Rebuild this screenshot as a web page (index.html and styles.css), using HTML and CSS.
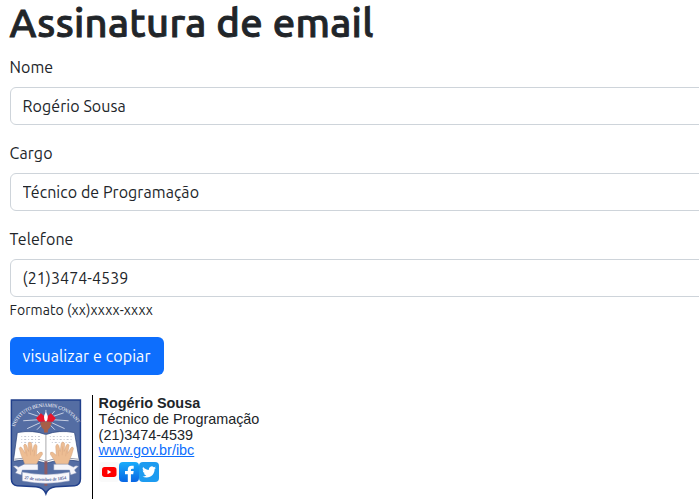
FILE: index.html
```
<!DOCTYPE html>
<html lang="pt-BR">
<head>
<meta charset="utf-8">
<title>Assinatura de email</title>
<link rel="stylesheet" href="styles.css">
</head>
<body>
<main class="page">
  <h1 class="title">Assinatura de email</h1>
  <form class="form">
    <div class="field">
      <label class="label" for="nome">Nome</label>
      <input class="control" id="nome" type="text" value="Rogério Sousa">
    </div>
    <div class="field">
      <label class="label" for="cargo">Cargo</label>
      <input class="control" id="cargo" type="text" value="Técnico de Programação">
    </div>
    <div class="field">
      <label class="label" for="telefone">Telefone</label>
      <input class="control" id="telefone" type="text" value="(21)3474-4539">
      <small class="hint">Formato (xx)xxxx-xxxx</small>
    </div>
    <button class="btn" type="button">visualizar e copiar</button>
  </form>
  <section class="signature">
    <svg class="crest" viewBox="-0.400 -0.400 73 98" width="72" height="98" role="img" aria-label="Instituto Benjamin Constant">
      <path d="M1 1H71V81Q71 87 65 88L46 89Q38 90 36 96Q34 90 26 89L7 88Q1 87 1 81Z" fill="#546da3" stroke="#203f8b" stroke-width="1.5"/>
      <path id="arc" d="M4.500 28C13 1 58 1 70 28" fill="none"/>
      <text class="crest-name"><textPath href="#arc" textLength="78">INSTITUTO BENJAMIN CONSTANT</textPath></text>
      <g stroke="#e5e9f3" stroke-width=".8">
        <path d="M36 20V11M33 19L27 12M39 19L45 12M30 18L18 14M42 18L54 14M28 21L13 22M44 21L59 22M30 24L17 30M42 24L55 30M32 26L27 31M40 26L45 31"/>
      </g>
      <path d="M31 14.500L35 18V23L29 23L26 19.500ZM41 14.500L37 18V23L43 23L46 19.500Z" fill="#e8152b"/>
      <path d="M36 13Q40 19 36 23Q32 19 36 13Z" fill="#fff"/>
      <path d="M30 24Q36 21.500 42 24L40 29L38 31V34H34V31L32 29Z" fill="#a65f48"/>
      <path d="M7 34Q23 31 36 36Q49 31 65 34L70 63Q52 60 36 65Q20 60 3 63Z" fill="#fff" stroke="#263f78" stroke-width=".7"/>
      <path d="M4 61Q22 58 36 63Q50 58 69 61" fill="none" stroke="#6b7188" stroke-width=".7"/>
      <path d="M36 36V63" stroke="#aaa9ac" stroke-width="1"/>
      <path d="M11 38H32M11 41H32M40 38H62M40 41H62M11 44H30M42 44H61" stroke="#c3c7d1" stroke-width="1" stroke-dasharray="1 2 2 2"/>
      <path d="M34.500 63H37.500V88H34.500Z" fill="#8d5b65"/>
      <g id="hand">
        <path d="M15 67Q13 61 11 57L9 50Q10 47 12 50L15 55L13.500 47Q14.500 44 16.500 47L18.500 53L18 45Q20 42 21.500 45L22.500 53L24 47Q26 44 27 48L26.500 57L30 54Q33 53 32.500 56Q28 62 26 67Z" fill="#edbd93" stroke="#d3a17c" stroke-width=".5"/>
        <path d="M17 58L16 52M20.500 57L20 48M24 58L24.500 52" stroke="#d9a680" stroke-width=".5"/>
      </g>
      <use href="#hand" transform="translate(73 0) scale(-1 1)"/>
      <path d="M3 68Q6 67 8 69L14 66H28V72H12L11 77L5 75L7 72ZM69 68Q66 67 64 69L58 66H44V72H60L61 77L67 75L65 72Z" fill="#f5f5fa" stroke="#7888b1" stroke-width=".5"/>
      <path d="M12 74Q36 79 60 74V83Q36 88 12 83Z" fill="#f8f7fb" stroke="#7888b1" stroke-width=".5"/>
      <path id="ribbon" d="M14 81Q36 85 58 81" fill="none"/>
      <text class="crest-date"><textPath href="#ribbon" textLength="43">27 de setembro de 1854</textPath></text>
    </svg>
    <div class="card">
      <strong>Rogério Sousa</strong>
      <span>Técnico de Programação</span>
      <span>(21)3474-4539</span>
      <a class="card-link" href="#">www.gov.br/ibc</a>
      <div class="social">
        <svg viewBox="0 0 20 20" width="20" height="20" aria-label="YouTube">
          <rect width="20" height="20" rx="3" fill="#fafafa"/>
          <rect x="3" y="5" width="14.500" height="10" rx="2.700" fill="#f00"/>
          <path d="M8.500 7.800V12.200L12.300 10Z" fill="#fff"/>
        </svg>
        <svg viewBox="0 0 20 20" width="20" height="20" aria-label="Facebook">
          <defs><linearGradient id="fb" x2="0" y2="1"><stop stop-color="#19acfb"/><stop offset="1" stop-color="#0866e4"/></linearGradient></defs>
          <rect width="20" height="20" rx="4" fill="url(#fb)"/>
          <path d="M8.800 20V12.300H6V9H8.800V7.500Q8.800 3.700 12.600 3.700H14.700V6.700H13.200Q11.900 6.700 11.900 8V9H14.700L14.200 12.300H11.900V20Z" fill="#fff"/>
        </svg>
        <svg viewBox="0 0 20 20" width="20" height="20" aria-label="Twitter">
          <rect width="20" height="20" rx="4" fill="#1d9bf0"/>
          <path transform="translate(3.200 3.100) scale(.575)" d="M23.950 4.570a10 10 0 0 1-2.820.78 4.960 4.960 0 0 0 2.160-2.730c-.95.56-2 .96-3.130 1.190a4.920 4.920 0 0 0-8.380 4.480C7.690 8.100 4.070 6.130 1.640 3.160a4.920 4.920 0 0 0 1.520 6.570 4.900 4.900 0 0 1-2.230-.61v.06a4.920 4.920 0 0 0 3.950 4.830 5 5 0 0 1-2.210.08 4.940 4.940 0 0 0 4.600 3.420A9.870 9.870 0 0 1 0 19.540a14 14 0 0 0 7.550 2.210c9.050 0 14-7.500 14-13.980v-.64a9.940 9.940 0 0 0 2.400-2.560Z" fill="#fff"/>
        </svg>
      </div>
    </div>
  </section>
</main>
</body>
</html>
```
FILE: styles.css
```
* { box-sizing: border-box; }

html { overflow: hidden; }

body {
  margin: 0;
  background: #fff;
  color: #212529;
  font: 16px/24px Ubuntu, "Noto Sans", sans-serif;
}

.page { width: 720px; padding-left: 9.600px; }

.title {
  margin: -1px 0 8px;
  font-size: 40px;
  font-weight: 500;
  line-height: 48px;
  letter-spacing: 0.3px;
  -webkit-text-stroke: 0.9px #212529;
}

.field { display: flex; flex-direction: column; margin-bottom: 16px; }

.label { margin-bottom: 8px; letter-spacing: 0.06px; }

.control {
  width: 100%;
  height: 38px;
  padding: 6px 12px;
  border: 1px solid #ced4da;
  border-radius: 6px;
  background: #fff;
  color: #212529;
  font: inherit;
  letter-spacing: 0.06px;
}

.hint { margin-top: 3px; font-size: 14px; line-height: 21px; letter-spacing: 0.05px; }

.btn {
  display: block;
  width: 154px;
  height: 38px;
  padding: 0;
  border: 0;
  border-radius: 6px;
  background: #0d6efd;
  color: #fff;
  font: inherit;
  letter-spacing: 0.1px;
  white-space: nowrap;
}

.signature { display: flex; margin-top: 20px; height: 104px; }

.crest { flex: none; margin: 3px 10px 0 0; }

.crest-name { font: 5px "Liberation Serif", serif; fill: #fff; }

.crest-date { font: bold 4.6px "Liberation Serif", serif; fill: #59699b; }

.card {
  display: flex;
  flex-direction: column;
  align-items: flex-start;
  padding-left: 6px;
  border-left: 1px solid #000;
  font: 14.4px/16px "Liberation Sans", Arial, sans-serif;
}

.card-link { color: #0d6efd; line-height: 15px; }

.social { display: flex; margin-top: 4px; }
```
